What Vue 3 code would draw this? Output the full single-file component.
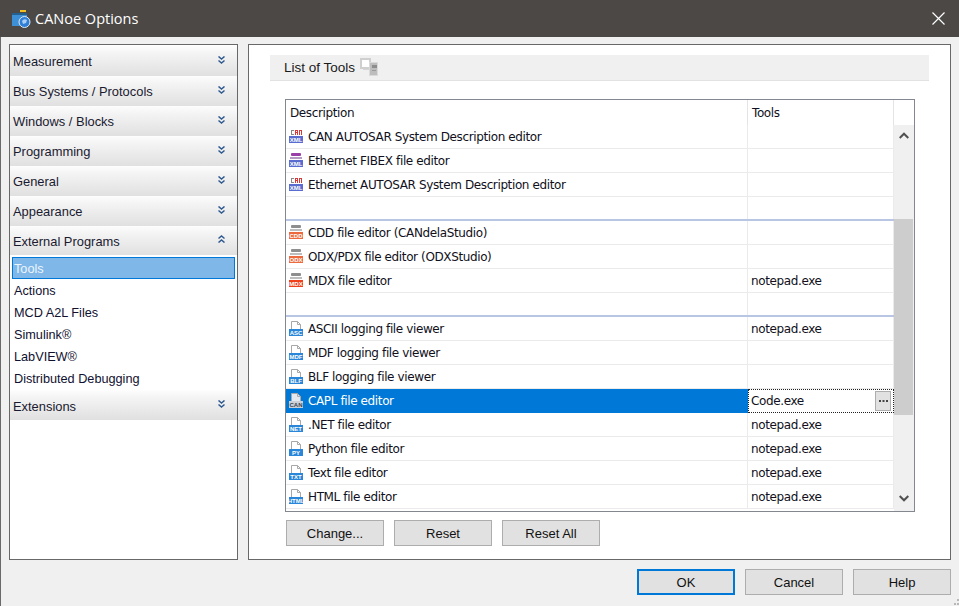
<script setup>
const groupsTop = ['Measurement', 'Bus Systems / Protocols', 'Windows / Blocks', 'Programming', 'General', 'Appearance']
const subItems = ['Actions', 'MCD A2L Files', 'Simulink®', 'LabVIEW®', 'Distributed Debugging']
const rows = [
  { d: 'CAN AUTOSAR System Description editor', t: '', i: 'can', l: 'XML' },
  { d: 'Ethernet FIBEX file editor', t: '', i: 'fibex', l: 'XML' },
  { d: 'Ethernet AUTOSAR System Description editor', t: '', i: 'can', l: 'XML' },
  { d: '', t: '', sep: true },
  { d: 'CDD file editor (CANdelaStudio)', t: '', i: 'disk', l: 'CDD' },
  { d: 'ODX/PDX file editor (ODXStudio)', t: '', i: 'disk', l: 'ODX' },
  { d: 'MDX file editor', t: 'notepad.exe', i: 'disk', l: 'MDX' },
  { d: '', t: '', sep: true },
  { d: 'ASCII logging file viewer', t: 'notepad.exe', i: 'doc', l: 'ASC' },
  { d: 'MDF logging file viewer', t: '', i: 'doc', l: 'MDF' },
  { d: 'BLF logging file viewer', t: '', i: 'doc', l: 'BLF' },
  { d: 'CAPL file editor', t: 'Code.exe', i: 'doc', l: 'CAN', sel: true },
  { d: '.NET file editor', t: 'notepad.exe', i: 'doc', l: 'NET' },
  { d: 'Python file editor', t: 'notepad.exe', i: 'doc', l: 'PY' },
  { d: 'Text file editor', t: 'notepad.exe', i: 'doc', l: 'TXT' },
  { d: 'HTML file editor', t: 'notepad.exe', i: 'doc', l: 'HTML' }
]
function bandColor(r) {
  if (r.sel) return '#c9d0d8'
  if (r.i === 'disk') return r.l === 'MDX' ? '#f0401c' : '#ec6a3e'
  if (r.i === 'doc') return '#2a86d8'
  return '#5a6cd0'
}
</script>

<template>
  <div class="dialog">
    <div class="titlebar">
      <svg class="appicon" width="20" height="18" viewBox="0 0 20 18">
        <rect x="1" y="3" width="15" height="13" fill="#3d8fd6" />
        <rect x="1" y="3" width="15" height="2" fill="#24618f" />
        <rect x="9" y="0" width="6" height="2" fill="#f0c020" />
        <circle cx="13.5" cy="12" r="5.5" fill="#2f7fd8" stroke="#dfeaf5" stroke-width="1" />
        <path d="M11 11q2-3 5-1l-1 3-3 1z" fill="#a9d0f2" />
      </svg>
      <span class="title">CANoe Options</span>
      <svg class="close" width="13" height="13" viewBox="0 0 13 13">
        <path d="M.5.5l12 12M12.5.5l-12 12" stroke="#fff" stroke-width="1.2" fill="none" />
      </svg>
    </div>

    <div class="content">
      <aside class="nav">
        <div v-for="g in groupsTop" :key="g" class="group">
          <span>{{ g }}</span>
          <svg class="chev" width="7" height="8" viewBox="0 0 7 8">
            <path d="M.5.5L3.500 3 6.500.5M.5 4.500L3.500 7l3-2.500" stroke="#2f5a90" stroke-width="1.5" fill="none" />
          </svg>
        </div>
        <div class="group short low">
          <span>External Programs</span>
          <svg class="chev" width="7" height="8" viewBox="0 0 7 8">
            <path d="M.5 3.500L3.500 1l3 2.500M.5 7.500L3.500 5l3 2.500" stroke="#2f5a90" stroke-width="1.5" fill="none" />
          </svg>
        </div>
        <div class="subs">
          <div class="sub active">Tools</div>
          <div v-for="s in subItems" :key="s" class="sub">{{ s }}</div>
        </div>
        <div class="group low">
          <span>Extensions</span>
          <svg class="chev" width="7" height="8" viewBox="0 0 7 8">
            <path d="M.5.5L3.500 3 6.500.5M.5 4.500L3.500 7l3-2.500" stroke="#2f5a90" stroke-width="1.5" fill="none" />
          </svg>
        </div>
      </aside>

      <main class="panel">
        <div class="band">
          <span>List of Tools</span>
          <svg width="19" height="19" viewBox="0 0 19 19">
            <rect x="1" y="1" width="9" height="9" fill="#fff" stroke="#cfcfcf" stroke-width="2" />
            <rect x="3" y="11" width="6" height="1" fill="#d4d4d4" />
            <rect x="9.500" y="4.500" width="8" height="13" fill="#bdbdbd" stroke="#dadada" />
            <rect x="12" y="7" width="5" height="3" fill="#8d8d8d" />
            <rect x="12" y="12" width="4" height="1" fill="#9a9a9a" />
          </svg>
        </div>

        <div class="grid">
          <div class="table">
            <div class="head">
              <div class="c1">Description</div>
              <div class="c2">Tools</div>
            </div>
            <div v-for="(r, i) in rows" :key="i" class="row" :class="{ sep: r.sep, sel: r.sel }">
              <div class="c1">
                <svg v-if="r.i" class="ico" :class="{ docico: r.i === 'doc' }" width="16" height="16" viewBox="0 0 16 16">
                  <template v-if="r.i === 'doc'">
                    <path d="M3.500 1.500h6l3 3v5h-9z" :fill="r.sel ? '#e4e9ef' : '#fff'" stroke="#a8a8a8" />
                    <path d="M9.500 1.500v3h3" fill="none" stroke="#a8a8a8" />
                  </template>
                  <template v-else-if="r.i === 'disk'">
                    <rect x="3" y="2" width="10" height="3" rx="1" fill="#8e8e8e" />
                    <rect x="2" y="6" width="12" height="2" fill="#bdbdbd" />
                  </template>
                  <template v-else-if="r.i === 'fibex'">
                    <rect x="3" y="2" width="10" height="3" rx="1" fill="#9a3fa8" />
                    <rect x="2" y="6" width="12" height="2" fill="#b39ac0" />
                  </template>
                  <template v-else>
                    <rect x="3" y="3" width="3" height="1" fill="#888" />
                    <rect x="3" y="4" width="1" height="3" fill="#888" />
                    <rect x="3" y="7" width="3" height="1" fill="#888" />
                    <rect x="7" y="3" width="3" height="1" fill="#d83838" />
                    <rect x="7" y="4" width="1" height="4" fill="#d83838" />
                    <rect x="9" y="4" width="1" height="4" fill="#d83838" />
                    <rect x="7" y="5" width="3" height="1" fill="#d83838" />
                    <rect x="11" y="3" width="1" height="5" fill="#d83838" />
                    <rect x="13" y="3" width="1" height="5" fill="#d83838" />
                    <rect x="12" y="3" width="1" height="1" fill="#d83838" />
                  </template>
                  <rect x="1" y="9" width="14" height="7" :fill="bandColor(r)" />
                  <text x="8" y="14.800" text-anchor="middle" class="mini" :class="{ minisel: r.sel }">{{ r.l }}</text>
                </svg>
                <span>{{ r.d }}</span>
              </div>
              <div class="c2">
                <template v-if="r.sel">
                  <span class="editval">{{ r.t }}</span>
                  <span class="dots">
                    <svg width="9" height="3" viewBox="0 0 9 3">
                      <path d="M0 0h2v2H0zM3.500 0h2v2h-2zM7 0h2v2H7z" fill="#444" />
                    </svg>
                  </span>
                </template>
                <template v-else>{{ r.t }}</template>
              </div>
            </div>
          </div>
          <div class="scroll">
            <div class="corner"></div>
            <div class="track">
              <div class="arrow">
                <svg width="10" height="7" viewBox="0 0 10 7">
                  <path d="M.7 6L5 1.700 9.300 6" stroke="#505050" stroke-width="2" fill="none" />
                </svg>
              </div>
              <div class="thumb"></div>
              <div class="arrow down">
                <svg width="10" height="7" viewBox="0 0 10 7">
                  <path d="M.7 1L5 5.300 9.300 1" stroke="#505050" stroke-width="2" fill="none" />
                </svg>
              </div>
            </div>
          </div>
        </div>

        <div class="actions">
          <button class="btn">Change...</button>
          <button class="btn">Reset</button>
          <button class="btn">Reset All</button>
        </div>
      </main>
    </div>

    <div class="footer">
      <button class="btn primary">OK</button>
      <button class="btn">Cancel</button>
      <button class="btn">Help</button>
      <svg class="grip" width="7" height="7" viewBox="0 0 7 7">
        <path d="M5 0h2v2H5zM2 4h2v2H2zM5 4h2v2H5z" fill="#b8b8b8" />
      </svg>
    </div>
  </div>
</template>

<style>
html, body { margin: 0; padding: 0; overflow: hidden; }
</style>

<style scoped>
.dialog {
  width: 959px;
  height: 606px;
  background: #f0f0f0;
  display: flex;
  flex-direction: column;
  box-sizing: border-box;
  border-left: 1px solid #6a6a6a;
  font-family: "Liberation Sans", Arial, sans-serif;
  font-size: 13px;
  color: #000;
  position: relative;
}
.titlebar {
  height: 37px;
  margin-left: -1px;
  background: #4b4846;
  display: flex;
  align-items: center;
  padding: 0 14px 0 11px;
  flex: none;
}
.appicon { margin-right: 4px; }
.title {
  color: #fff;
  font-family: "Open Sans", sans-serif;
  font-size: 14.500px;
  flex: 1;
}
.content {
  display: flex;
  gap: 10px;
  padding: 7px 8px 0 8px;
  height: 516px;
  flex: none;
}
.nav {
  width: 229px;
  box-sizing: border-box;
  border: 1px solid #686868;
  background: #fff;
  padding-top: 1px;
  flex: none;
}
.group {
  height: 30px;
  box-sizing: border-box;
  background: linear-gradient(#fdfdfd, #f4f4f4 25%, #e0e0e0);
  display: flex;
  align-items: center;
  padding: 0 12px 0 3px;
  font-size: 12.900px;
  color: #1a1a30;
}
.group.short { height: 29px; }
.group.low { padding-top: 2px; }
.group.low .chev { margin-top: -5px; }
.group span { flex: 1; }
.chev { margin-top: -3px; }
.subs { padding: 2px 2px 1px 2px; display: flex; flex-direction: column; }
.sub {
  height: 22px;
  line-height: 24px;
  padding-left: 2px;
  font-size: 12.700px;
  color: #101030;
}
.sub.active {
  box-sizing: border-box;
  line-height: 22px;
  padding-left: 1px;
  background: #7fb8e8;
  border: 1px solid #0078d7;
  color: #eef4fa;
}
.panel {
  width: 703px;
  box-sizing: border-box;
  border: 1px solid #686868;
  background: #fff;
  padding: 10px 21px 0 21px;
  flex: none;
}
.band {
  height: 26px;
  box-sizing: border-box;
  background: #f0f0f0;
  border-bottom: 1px solid #e2e2e2;
  padding-left: 14px;
  display: flex;
  align-items: center;
  gap: 5px;
  font-size: 13.500px;
  color: #1a1a1a;
  width: 659px;
}
.grid {
  margin: 18px 0 0 15px;
  width: 630px;
  height: 413px;
  box-sizing: border-box;
  border: 1px solid #828790;
  background: #fff;
  display: flex;
  font-family: "DejaVu Sans", sans-serif;
  font-size: 12px;
  letter-spacing: -0.38px;
  color: #101020;
  overflow: hidden;
}
.table { width: 608px; flex: none; }
.head {
  height: 25px;
  display: flex;
}
.head .c1, .head .c2 { align-items: center; }
.head .c1 { padding-left: 4px; border-right: 1px solid #e4e4e4; }
.head .c2 { padding-left: 4px; border-right: 1px solid #e4e4e4; }
.row {
  height: 24px;
  display: flex;
  box-sizing: border-box;
  border-bottom: 1px solid #ebebeb;
}
.row.sep { border-bottom: 2px solid #b8c6e4; }
.c1 {
  width: 462px;
  box-sizing: border-box;
  display: flex;
  align-items: center;
  border-right: 1px solid #ebebeb;
  padding-left: 2px;
  flex: none;
}
.c2 {
  width: 146px;
  box-sizing: border-box;
  display: flex;
  align-items: center;
  padding-left: 3px;
  border-right: 1px solid #ebebeb;
  flex: none;
}
.ico { margin: -4px 4px 0 0; flex: none; overflow: visible; }
.ico.docico { margin-top: -2px; }
.mini {
  font-family: "Liberation Sans", sans-serif;
  font-size: 6px;
  font-weight: 700;
  fill: #fff;
  letter-spacing: 0;
}
.minisel { fill: #3a4650; }
.row.sel { border-bottom: none; }
.row.sel .c1 { background: #0078d7; color: #fff; border-right: none; }
.row.sel .c2 {
  border: 1px dotted #222;
  background: #fff;
  justify-content: space-between;
  padding: 0 2px 0 2px;
  height: 24px;
}
.dots {
  width: 16px;
  height: 20px;
  box-sizing: border-box;
  background: #e1e1e1;
  border: 1px solid #adadad;
  display: flex;
  align-items: center;
  justify-content: center;
}
.scroll { width: 20px; flex: none; display: flex; flex-direction: column; }
.corner { height: 25px; flex: none; }
.track {
  flex: 1;
  background: #f0f0f0;
  display: flex;
  flex-direction: column;
  align-items: center;
}
.arrow {
  height: 20px;
  display: flex;
  align-items: center;
  justify-content: center;
  flex: none;
}
.thumb {
  width: 19px;
  height: 196px;
  margin-top: 74px;
  background: #cdcdcd;
  align-self: flex-start;
}
.arrow.down { margin-top: auto; margin-bottom: 3px; }
.actions {
  display: flex;
  gap: 10px;
  margin: 8px 0 0 16px;
}
.btn {
  width: 98px;
  height: 26px;
  box-sizing: border-box;
  background: #e1e1e1;
  border: 1px solid #adadad;
  font-family: "Liberation Sans", sans-serif;
  font-size: 13px;
  color: #111;
  padding: 0;
}
.footer {
  flex: 1;
  display: flex;
  justify-content: flex-end;
  align-items: flex-start;
  gap: 10px;
  padding: 9px 8px 0 0;
  position: relative;
}
.primary { border: 2px solid #0078d7; }
.grip { position: absolute; right: 0; bottom: 0; }
</style>
